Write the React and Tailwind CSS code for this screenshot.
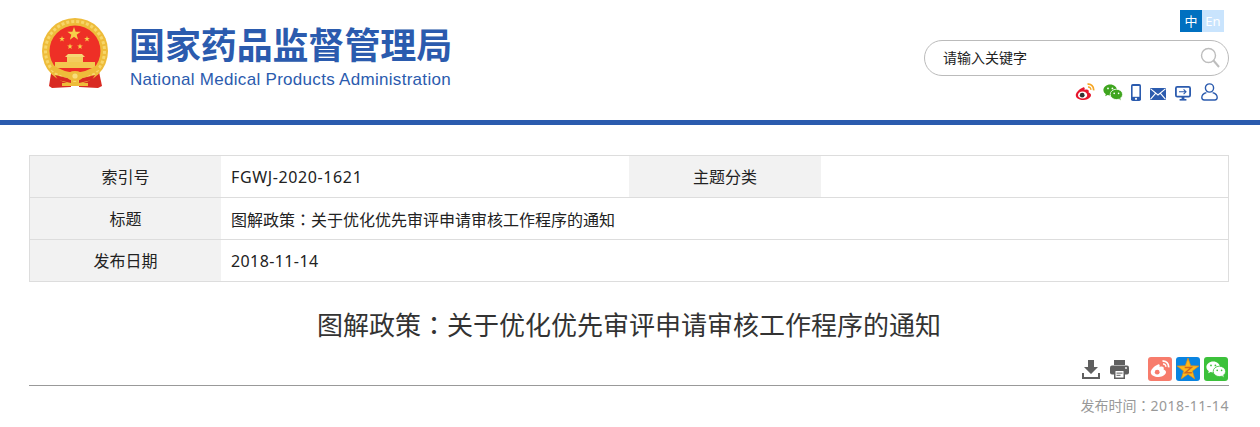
const cjk = { fontFamily: '"Noto Sans", "Noto Sans CJK SC", sans-serif' }

function star(cx, cy, r, rot = -90) {
  const pts = []
  for (let i = 0; i < 10; i++) {
    const a = ((rot + i * 36) * Math.PI) / 180
    const rad = i % 2 === 0 ? r : r * 0.4
    pts.push(`${(cx + rad * Math.cos(a)).toFixed(2)},${(cy + rad * Math.sin(a)).toFixed(2)}`)
  }
  return pts.join(' ')
}

function Emblem() {
  return (
    <svg width="68" height="72" viewBox="0 0 68 72" className="shrink-0">
      <path d="M11 50 L8 69 L11 71 L30 70 L30 60 Z" fill="#d92a22" />
      <path d="M57 50 L61 69 L57 71 L38 70 L38 60 Z" fill="#d92a22" />
      <circle cx="34" cy="34" r="33" fill="#eebc3a" />
      <circle cx="34" cy="34" r="29.5" fill="none" stroke="#f7d66a" strokeWidth="3" strokeDasharray="3 2" />
      <circle cx="34" cy="34" r="25.5" fill="#ee2f26" />
      <polygon points={star(33, 17, 7)} fill="#f6d04a" />
      <polygon points={star(21, 22, 3)} fill="#f6d04a" />
      <polygon points={star(46, 22, 3)} fill="#f6d04a" />
      <polygon points={star(29, 29.5, 3)} fill="#f6d04a" />
      <polygon points={star(39, 29.5, 3)} fill="#f6d04a" />
      <path d="M24 40 L27 37 H41 L44 40 Z" fill="#f6d675" />
      <rect x="26" y="40" width="16" height="5" fill="#f3cd5e" />
      <rect x="14" y="45" width="40" height="6" fill="#f3c84f" />
      <path d="M9 52 Q34 70 59 52 L56 48 Q34 63 12 48 Z" fill="#eebc3a" />
      <path d="M14 58 L30 62 L30 66 L17 63 Z" fill="#d92a22" />
      <path d="M54 58 L38 62 L38 66 L51 63 Z" fill="#d92a22" />
      <ellipse cx="34" cy="59" rx="8" ry="5" fill="#eebc3a" />
      <circle cx="34" cy="59" r="2.6" fill="#f8dd7c" />
      <rect x="21" y="66" width="26" height="3" fill="#eebc3a" />
    </svg>
  )
}

function SearchIcon() {
  return (
    <svg width="20" height="22" viewBox="0 0 20 22" fill="none" stroke="#bdbdbd">
      <circle cx="8.5" cy="8.5" r="7" strokeWidth="1.4" />
      <path d="M13.5 13.5 L19 20" strokeWidth="2" />
    </svg>
  )
}

function WeiboIcon({ eye = '#333', body = '#e6162d', wave = '#f5a623', size = 20 }) {
  return (
    <svg width={size} height={size * 0.9} viewBox="0 0 20 18">
      <path d="M8 4.5 C4 6 0.5 10 0.8 12.5 C1 15.5 5 17.2 8.8 17 C12.8 16.8 16.2 14.6 16 11.8 C15.8 10.2 14.2 9.6 13.6 9.4 C14.4 7.5 13.2 6.4 11.4 6.5 C10.4 6.5 9.6 7 9.6 7 C10 5 9.4 3.9 8 4.5 Z" fill={body} />
      <ellipse cx="7.6" cy="12" rx="4.6" ry="3.6" fill="#fff" />
      <circle cx="7.2" cy="12.2" r="2.4" fill={eye} />
      <path d="M12.5 1.2 C16 0.6 19 3.4 18.6 7.4" fill="none" stroke={wave} strokeWidth="1.7" />
      <path d="M13 4 C14.8 3.8 16 5.2 15.8 6.8" fill="none" stroke={wave} strokeWidth="1.4" />
    </svg>
  )
}

function WechatIcon({ c1 = '#3fa51f', c2 = '#3fa51f', eye = '#fff', gap = '#fff' }) {
  return (
    <svg width="20" height="17" viewBox="0 0 20 17">
      <path d="M7.2 0.5 C3.4 0.5 0.4 3 0.4 6 C0.4 7.8 1.4 9.2 2.8 10.2 L2.2 12.2 L4.6 11 C5.4 11.2 6.2 11.4 7.2 11.4 C11 11.4 14 8.9 14 6 C14 3 11 0.5 7.2 0.5 Z" fill={c1} />
      <ellipse cx="13.4" cy="10.4" rx="6.2" ry="5.2" fill={c2} stroke={gap} strokeWidth="0.8" />
      <path d="M16 14.6 L17.6 16.4 L17.2 13.8 Z" fill={c2} />
      <circle cx="5" cy="4.4" r="0.9" fill={eye} />
      <circle cx="9.4" cy="4.4" r="0.9" fill={eye} />
      <circle cx="11.2" cy="9.4" r="0.8" fill={eye} />
      <circle cx="15.6" cy="9.4" r="0.8" fill={eye} />
    </svg>
  )
}

function PhoneIcon() {
  return (
    <svg width="10" height="17" viewBox="0 0 10 17">
      <rect x="0" y="0" width="10" height="17" rx="1.8" fill="#2b5bae" />
      <rect x="1.6" y="2" width="6.8" height="10.8" fill="#fff" />
      <circle cx="5" cy="14.8" r="1.1" fill="#fff" />
    </svg>
  )
}

function MailIcon() {
  return (
    <svg width="16" height="12" viewBox="0 0 16 12">
      <rect width="16" height="12" rx="1" fill="#2b5bae" />
      <path d="M0.6 0.8 L8 7 L15.4 0.8 M0.6 11.2 L5.6 5.4 M15.4 11.2 L10.4 5.4" fill="none" stroke="#fff" strokeWidth="1.1" />
    </svg>
  )
}

function ScreenIcon() {
  return (
    <svg width="16" height="15" viewBox="0 0 16 15">
      <rect x="0.9" y="0.9" width="14.2" height="9.8" rx="1.4" fill="none" stroke="#2b5bae" strokeWidth="1.8" />
      <path d="M4 5.8 H11 M8.6 3.4 L11 5.8 L8.6 8.2" fill="none" stroke="#2b5bae" strokeWidth="1.1" />
      <rect x="6.6" y="11" width="2.8" height="2.4" fill="#2b5bae" />
      <rect x="4.6" y="13" width="6.8" height="1.6" fill="#2b5bae" />
    </svg>
  )
}

function UserIcon() {
  return (
    <svg width="17" height="18" viewBox="0 0 17 18" fill="none" stroke="#2b5bae" strokeWidth="1.4">
      <circle cx="8.5" cy="5" r="4.1" />
      <path d="M5.4 9.6 C2.4 10.4 0.8 12.4 0.8 14.6 C0.8 16 1.8 17 3.2 17 H13.8 C15.2 17 16.2 16 16.2 14.6 C16.2 12.4 14.6 10.4 11.6 9.6" />
    </svg>
  )
}

function DownloadIcon() {
  return (
    <svg width="18" height="19" viewBox="0 0 18 19" fill="#5f5f5f">
      <path d="M6 0 H12 V7 H16 L9 14 L2 7 H6 Z" />
      <path d="M0 13 H2 V17 H16 V13 H18 V19 H0 Z" />
    </svg>
  )
}

function PrintIcon() {
  return (
    <svg width="19" height="19" viewBox="0 0 19 19">
      <path d="M4 0 H15 V5 H4 Z" fill="#5f5f5f" />
      <rect x="0" y="5.5" width="19" height="9" rx="2" fill="#5f5f5f" />
      <rect x="4" y="10" width="11" height="9" fill="#5f5f5f" />
      <rect x="5.5" y="11" width="8" height="6.5" fill="#fff" />
      <rect x="6.5" y="12.6" width="6" height="1" fill="#5f5f5f" />
      <rect x="6.5" y="14.8" width="4" height="1" fill="#5f5f5f" />
      <circle cx="16" cy="8" r="0.9" fill="#fff" />
    </svg>
  )
}

function QzoneIcon() {
  return (
    <svg width="22" height="22" viewBox="0 0 20 20">
      <polygon points={star(10, 10.5, 10.5)} fill="#fbb91c" stroke="#e58a12" strokeWidth="0.6" />
      <path d="M7 8.6 H13 L7.5 13.4 H13.5" fill="none" stroke="#d2691e" strokeWidth="1.4" />
    </svg>
  )
}

// the colon sits mid-height in the original, the TC face draws it that way
function Colon() {
  return <span className="font-['Noto_Sans_CJK_TC']">：</span>
}

const rows = [
  { label: '索引号', value: <span className="tracking-[0.62px]">FGWJ-2020-1621</span>, extra: '主题分类' },
  { label: '标题', value: <>图解政策<Colon />关于优化优先审评申请审核工作程序的通知</> },
  { label: '发布日期', value: <span className="tracking-[0.4px]">2018-11-14</span> },
]

export default function App() {
  return (
    <div className="h-[427px] w-[1260px] overflow-hidden bg-white text-[#222]" style={cjk}>
      <header className="flex h-[125px] justify-between border-b-[5px] border-[#2b5bae] pl-[41px] pr-[31px]">
        <div className="flex items-start pt-[17px]">
          <Emblem />
          <div className="ml-[20px] pt-[5px]">
            <div className="text-[36px] font-bold leading-[47px] tracking-[-0.1px] text-[#2b5bae]">国家药品监督管理局</div>
            <div className="whitespace-nowrap pl-[1px] text-[17px] leading-[21px] tracking-[0.3px] text-[#2b5bae]" style={{ fontFamily: '"Liberation Sans", sans-serif' }}>
              National Medical Products Administration
            </div>
          </div>
        </div>
        <div className="flex flex-col items-end">
          <div className="mt-[10px] mr-[5px] flex text-[13px] leading-[22px]">
            <span className="h-[22px] w-[22px] bg-[#0070c0] text-center text-white">中</span>
            <span className="h-[22px] w-[22px] bg-[#c9e4fd] text-center text-white">En</span>
          </div>
          <div className="mt-[8px] flex h-[36px] w-[305px] items-center justify-between rounded-full border border-[#bbb] pl-[18px] pr-[8px] text-[14px]">
            <span className="pb-[2px]">请输入关键字</span>
            <SearchIcon />
          </div>
          <div className="mt-[7px] mr-[11px] flex items-end">
            <WeiboIcon />
            <span className="ml-[8px]"><WechatIcon /></span>
            <span className="ml-[8px]"><PhoneIcon /></span>
            <span className="mb-[1px] ml-[9px]"><MailIcon /></span>
            <span className="ml-[9px]"><ScreenIcon /></span>
            <span className="ml-[10px]"><UserIcon /></span>
          </div>
        </div>
      </header>

      <main className="pl-[29px] pr-[31px] pt-[30px]">
        <div className="w-[1200px] border border-b-0 border-[#ddd]">
          {rows.map((row) => (
            <div key={row.label} className="flex h-[42px] border-b border-[#ddd] text-[16px] leading-[43px]">
              <div className="w-[191px] bg-[#f2f2f2] text-center">{row.label}</div>
              <div className="w-[408px] whitespace-nowrap pl-[10px]">{row.value}</div>
              {row.extra && <div className="w-[192px] bg-[#f2f2f2] text-center">{row.extra}</div>}
            </div>
          ))}
        </div>

        <h1 className="mt-[23px] text-center text-[26px] font-normal leading-[38px] text-[#333]">
          图解政策<Colon />关于优化优先审评申请审核工作程序的通知
        </h1>

        <div className="mt-[13px] flex h-[29px] items-start justify-end border-b border-[#999] pr-[1px]">
          <span className="mt-[3px]"><DownloadIcon /></span>
          <span className="ml-[10px] mt-[3px]"><PrintIcon /></span>
          <span className="ml-[19px] flex h-[24px] w-[24px] items-center justify-center rounded-[3px] bg-[#f77c6c]">
            <WeiboIcon eye="#f77c6c" body="#fff" wave="#fff" />
          </span>
          <span className="ml-[4px] flex h-[24px] w-[24px] items-center justify-center rounded-[3px] bg-[#0a84e0]">
            <QzoneIcon />
          </span>
          <span className="ml-[4px] flex h-[24px] w-[24px] items-center justify-center rounded-[3px] bg-[#3cc13b]">
            <WechatIcon c1="#fff" c2="#fff" eye="#3cc13b" gap="#3cc13b" />
          </span>
        </div>

        <div className="mt-[9px] text-right text-[14px] leading-[20px] text-[#999]">
          发布时间<Colon /><span className="tracking-[0.55px]">2018-11-14</span>
        </div>
      </main>
    </div>
  )
}
